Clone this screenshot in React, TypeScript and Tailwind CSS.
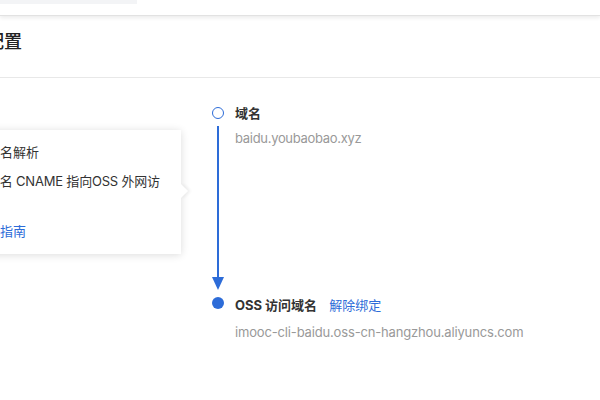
import React from "react";

export default function App() {
  const font = { fontFamily: 'Inter, "Noto Sans CJK SC", sans-serif' };
  return (
    <div className="w-[600px] h-[400px] bg-white overflow-hidden relative text-[#333]" style={font}>
      {/* top header strip */}
      <div className="h-[16px] bg-white border-b border-[#e2e2e2] shadow-[0_2px_4px_rgba(0,0,0,0.08)] relative z-10">
        <div className="w-[137px] h-[4px] bg-[#f3f4f6]" />
      </div>
      {/* title */}
      <div className="h-[62px] border-b border-[#e8e8e8] pt-[14px]">
        <h2 className="-ml-[14px] text-[18px] leading-[24px] font-medium text-[#222]">配置</h2>
      </div>
      {/* body */}
      <div className="flex items-start">
        {/* popover card */}
        <div className="relative -ml-[29px] w-[210px] h-[124px] mt-[52px] bg-white shadow-[0_1px_8px_rgba(0,0,0,0.14)] px-4 pt-3 pb-[13px] text-[13px]">
          <div className="leading-[20px] text-[#333] whitespace-nowrap">域名解析</div>
          <div className="mt-[7px] leading-[24px] text-[#333] whitespace-nowrap tracking-[-0.2px]">
            <div>域名 CNAME 指向OSS 外网访</div>
            <div>问</div>
          </div>
          <div className="mt-[4px] leading-[20px] text-[#2d6cd8] whitespace-nowrap">看指南</div>
          <div className="absolute right-[-5px] top-[56px] w-[10px] h-[10px] bg-white rotate-45 shadow-[2px_-2px_3px_rgba(0,0,0,0.06)]" />
        </div>
        {/* timeline */}
        <div className="ml-[31px] pt-[25px] grid grid-cols-[12px_auto] gap-x-[11px] text-[13px]">
          {/* row A */}
          <div className="h-[20px] flex items-center">
            <div className="w-[12px] h-[12px] rounded-full border-[1.5px] border-[#2d6cd8]" />
          </div>
          <div className="h-[20px] leading-[20px] font-bold text-[#333]">域名</div>
          {/* row B */}
          <div className="h-[172px] flex flex-col items-center pt-[3px] pb-[5px]">
            <div className="w-[1.5px] flex-1 bg-[#2d6cd8]" />
            <svg width="12" height="13" viewBox="0 0 12 13" className="-mt-[1px]">
              <polygon points="0,0 12,0 6,13" fill="#2d6cd8" />
            </svg>
          </div>
          <div className="h-[172px]">
            <div className="mt-[5px] leading-[20px] text-[#999] tracking-[-0.3px]">baidu.youbaobao.xyz</div>
          </div>
          {/* row C */}
          <div className="h-[20px] flex items-start">
            <div className="mt-[2px] w-[12px] h-[12px] rounded-full bg-[#2d6cd8]" />
          </div>
          <div className="h-[20px] leading-[20px] flex items-center whitespace-nowrap">
            <span className="font-bold text-[#333]">OSS 访问域名</span>
            <span className="ml-[12px] text-[#2d6cd8]">解除绑定</span>
          </div>
          {/* row D */}
          <div />
          <div className="mt-[7px] leading-[20px] text-[#999] whitespace-nowrap tracking-[-0.16px]">
            imooc-cli-baidu.oss-cn-hangzhou.aliyuncs.com
          </div>
        </div>
      </div>
    </div>
  );
}
